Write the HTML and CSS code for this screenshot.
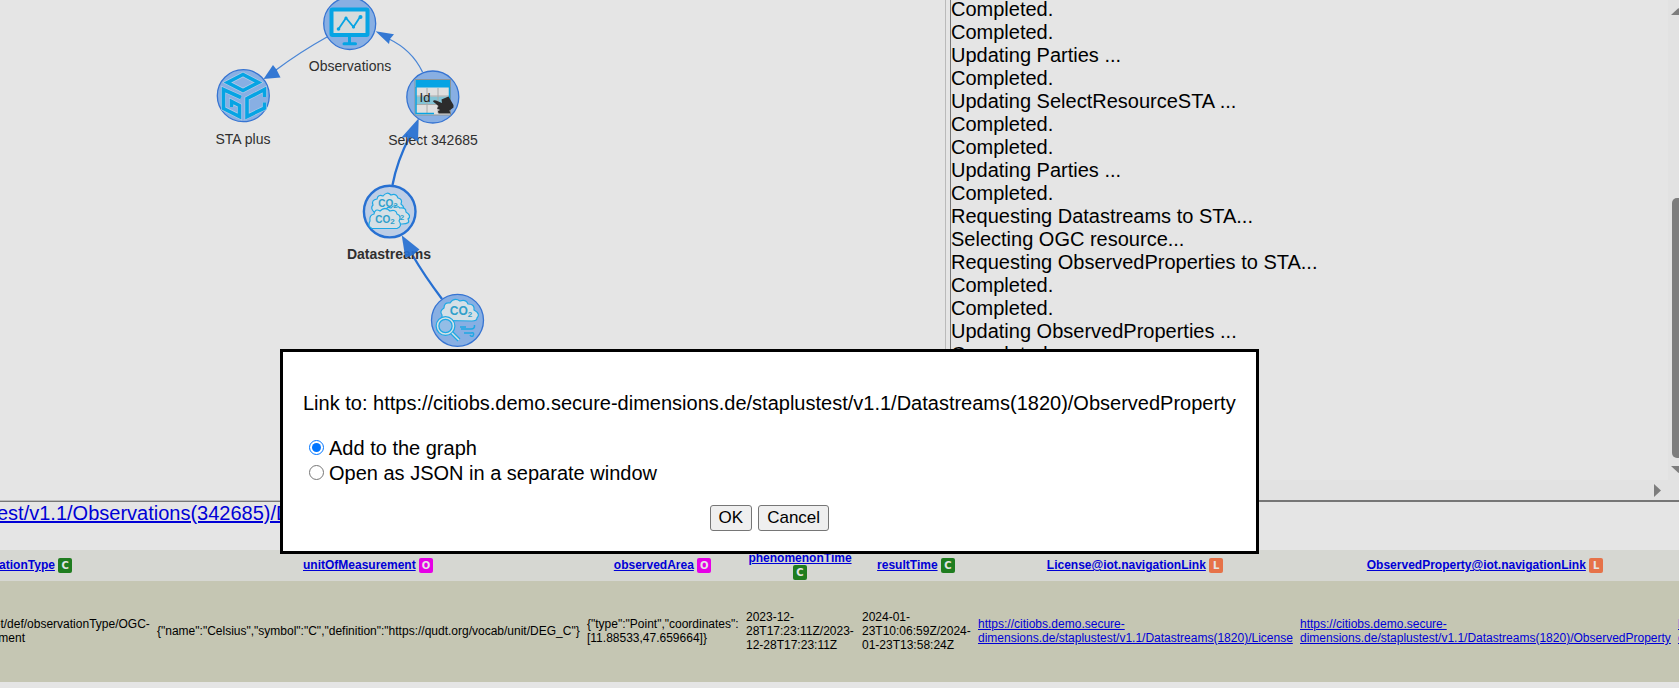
FILE: index.html
```html
<!DOCTYPE html>
<html lang="en">
<head>
<meta charset="utf-8">
<title>STA plus graph</title>
<link rel="stylesheet" href="styles.css">
</head>
<body>
<div class="app">
  <div class="workspace">
    <section class="graph" aria-label="Graph">
      <svg class="graph-canvas" width="560" height="500" viewBox="0 0 560 500">
        <g class="edges">
          <path d="M327 37Q300 52 276 70"/>
          <path d="M422.500 72Q412 50 389 39"/>
          <path class="strong" d="M392.500 185Q397 161 410 136"/>
          <path class="strong" d="M442 299Q424 275 413 256"/>
        </g>
        <g class="labels">
          <text x="350" y="71">Observations</text>
          <text x="243" y="144">STA plus</text>
          <text x="433" y="145">Select 342685</text>
          <text class="selected" x="389" y="259">Datastreams</text>
        </g>
        <g class="arrows">
          <path d="M263.500 79L273 65L276.500 69.500L280.500 77.500Z"/>
          <path d="M375.500 31.300L394 34.300L390 39L389 44Z"/>
          <path d="M418.700 118.300L418 141.500L410.500 137L401.500 137.500Z"/>
          <path d="M401.700 235.300L405.300 257.700L413 255L419.500 249.500Z"/>
        </g>
        <g class="node">
          <circle cx="349.700" cy="23.500" r="26"/>
          <rect x="331.500" y="9.500" width="36" height="25.500" rx="1" fill="#d5dbdc" stroke="#06a4e4" stroke-width="4"/>
          <path d="M349.500 36v7M344 43.700h11.500" fill="none" stroke="#06a4e4" stroke-width="3" stroke-linecap="round"/>
          <path d="M338.500 29L346 18L353.500 27L360 17" fill="none" stroke="#06a4e4" stroke-width="1.800"/>
          <g fill="#06a4e4"><circle cx="338.500" cy="29" r="1.800"/><circle cx="346" cy="18" r="1.600"/><circle cx="353.500" cy="27" r="1.600"/><circle cx="360.500" cy="17" r="2"/></g>
        </g>
        <g class="node">
          <circle cx="243.300" cy="95.700" r="26"/>
          <g stroke="#b4cce8" stroke-width="4.800" fill="none">
            <path d="M227.500 82.500L243 74.500L258.500 82.500L243 90.500Z"/>
            <path d="M241 97.500L223.500 89.500V108.500L239.500 116.500V105.500L231.500 101.500V107"/>
            <path d="M264.500 97V89.500L247 98.500V116.500L264.500 108V102.500"/>
          </g>
          <g stroke="#06a4e4" stroke-width="3.600" fill="none">
            <path d="M227.500 82.500L243 74.500L258.500 82.500L243 90.500Z"/>
            <path d="M241 97.500L223.500 89.500V108.500L239.500 116.500V105.500L231.500 101.500V107"/>
            <path d="M264.500 97V89.500L247 98.500V116.500L264.500 108V102.500"/>
          </g>
        </g>
        <g class="node">
          <circle cx="432.800" cy="97" r="26"/>
          <rect x="415" y="79.500" width="35.500" height="35.500" fill="#dfdfdf" stroke="#8d9496"/>
          <rect x="415.500" y="80" width="34.500" height="7.500" fill="#06a4e4"/>
          <rect x="416" y="96.500" width="34" height="8" fill="#84c4d6"/>
          <path d="M427 88v25M438 88v25M416 96h34M416 104.500h34" stroke="#aaa" fill="none"/>
          <path d="M416 87v26.500h18M449.500 87v13" stroke="#06a4e4" stroke-width="1.500" fill="none"/>
          <text class="id-text" x="425" y="102">Id</text>
          <path d="M433 101.500Q433.500 99.500 436 100.500L442 103L441.500 99.500L448.500 96.500L453.500 105V107.500L449.500 110.500L450.500 113.500H438.500L438 111L440 110L437 108.500L438.500 106Z" fill="#2c2c2c"/>
        </g>
        <g class="node active">
          <circle cx="389.700" cy="211.600" r="25.800"/>
          <g class="cloud">
            <path d="M374 212Q370 208 373 205Q371 200 377 199Q378 194 383 196Q387 191 391 195Q396 193 398 198Q403 199 401 204Q406 208 402 213Z"/>
            <path d="M388 224Q383 214 386 211Q386 206 391 208Q395 203 400 208Q406 207 406 212Q412 216 408 219Q411 224 402 224Z"/>
            <path d="M372 228.500Q367 226 370 221Q369 215 374 214Q375 208 380 211Q385 206 390 211Q396 209 397 214Q402 216 399 221Q403 226 397 228.500Z"/>
          </g>
          <text class="co2" x="388" y="207">CO<tspan class="sub" dy="1">2</tspan></text>
          <text class="co2 sub" x="402" y="220">2</text>
          <text class="co2" x="385" y="223">CO<tspan class="sub" dy="1">2</tspan></text>
        </g>
        <g class="node">
          <circle cx="457.500" cy="320.300" r="26"/>
          <g class="cloud">
            <path d="M448 320.500Q441 321 442 315Q439 311 444 308Q444 302 450 303Q454 297 460 301Q466 299 468 304Q475 304 474 310Q481 314 477 318Q477 321 472 321Z"/>
          </g>
          <text class="co2 large" x="461" y="315">CO<tspan class="sub" dy="2">2</tspan></text>
          <g fill="none" stroke="#1fa8e4" stroke-width="4"><circle cx="445.500" cy="326" r="8" fill="#93bde6"/><path d="M451.500 332.500L459 340"/></g>
          <g fill="none" stroke="#d5e2e6" stroke-width="1.500"><circle cx="445.500" cy="326" r="8"/><path d="M452 333L459 340"/></g>
          <path d="M461 329H471Q475 329 474.500 325M464 333H471Q475 332 473 336Q471 337 470 335M460 327H466" fill="none" stroke="#1fa8e4" stroke-width="1.500"/>
        </g>
      </svg>
    </section>
    <section class="log" aria-label="Log">
      <div class="log-text">
        <div>Completed.</div>
        <div>Completed.</div>
        <div>Updating Parties ...</div>
        <div>Completed.</div>
        <div>Updating SelectResourceSTA ...</div>
        <div>Completed.</div>
        <div>Completed.</div>
        <div>Updating Parties ...</div>
        <div>Completed.</div>
        <div>Requesting Datastreams to STA...</div>
        <div>Selecting OGC resource...</div>
        <div>Requesting ObservedProperties to STA...</div>
        <div>Completed.</div>
        <div>Completed.</div>
        <div>Updating ObservedProperties ...</div>
        <div>Completed.</div>
      </div>
      <div class="scroll-y" aria-hidden="true">
        <svg width="15" height="7" viewBox="0 0 15 7"><path d="M0 7L7.500 0L15 7Z"/></svg>
        <div class="thumb"></div>
        <svg width="15" height="7" viewBox="0 0 15 7"><path d="M0 0L7.500 7L15 0Z"/></svg>
      </div>
      <div class="scroll-x" aria-hidden="true">
        <svg width="7" height="13" viewBox="0 0 7 13"><path d="M0 0L7 6.500L0 13Z"/></svg>
      </div>
    </section>
  </div>
  <div class="resource"><a href="#resource">est/v1.1/Observations(342685)/Datastream</a></div>
  <div class="table-area">
    <table class="records">
      <colgroup><col class="c-type"><col class="c-unit"><col class="c-area"><col class="c-time"><col class="c-time"><col class="c-license"><col class="c-property"><col class="c-more"></colgroup>
      <thead>
        <tr>
          <th><a href="#t">observationType</a> <span class="badge code">C</span></th>
          <th><a href="#u">unitOfMeasurement</a> <span class="badge object">O</span></th>
          <th><a href="#a">observedArea</a> <span class="badge object">O</span></th>
          <th><a href="#p">phenomenonTime</a> <span class="badge code">C</span></th>
          <th><a href="#r">resultTime</a> <span class="badge code">C</span></th>
          <th><a href="#l">License@iot.navigationLink</a> <span class="badge link">L</span></th>
          <th><a href="#o">ObservedProperty@iot.navigationLink</a> <span class="badge link">L</span></th>
          <th></th>
        </tr>
      </thead>
      <tbody>
        <tr>
          <td>http://www.opengis.net/def/observationType/OGC-<br>OM/2.0/OM_Measurement</td>
          <td>{"name":"Celsius","symbol":"C","definition":"https://qudt.org/vocab/unit/DEG_C"}</td>
          <td>{"type":"Point","coordinates":<br>[11.88533,47.659664]}</td>
          <td>2023-12-<br>28T17:23:11Z/2023-<br>12-28T17:23:11Z</td>
          <td>2024-01-<br>23T10:06:59Z/2024-<br>01-23T13:58:24Z</td>
          <td><a href="#license">https://citiobs.demo.secure-<br>dimensions.de/staplustest/v1.1/Datastreams(1820)/License</a></td>
          <td><a href="#property">https://citiobs.demo.secure-<br>dimensions.de/staplustest/v1.1/Datastreams(1820)/ObservedProperty</a></td>
          <td><a href="#more">https://citiobs.demo.secure-<br>dimensions.de</a></td>
        </tr>
      </tbody>
    </table>
  </div>
</div>
<form class="dialog" role="dialog" aria-label="Open link">
  <p class="dialog-link">Link to: https://citiobs.demo.secure-dimensions.de/staplustest/v1.1/Datastreams(1820)/ObservedProperty</p>
  <div class="options">
    <label><input type="radio" name="action" value="graph" checked> Add to the graph</label>
    <label><input type="radio" name="action" value="json"> Open as JSON in a separate window</label>
  </div>
  <div class="actions"><button type="button">OK</button><button type="button">Cancel</button></div>
</form>
</body>
</html>
```
FILE: styles.css
```css
* { box-sizing: border-box; }
body {
  margin: 0;
  overflow: hidden;
  background: #e5e5e5;
  color: #000;
  font: 20px/23px "Liberation Sans", Arial, sans-serif;
}
a { color: #0000d6; }
.app { display: flex; flex-direction: column; min-height: 100vh; }

.workspace {
  display: grid;
  grid-template-columns: 946fr 729fr;
  column-gap: 4px;
  height: 502px;
  border-bottom: 1px solid #767676;
}
.graph { border: solid #bababa; border-width: 0 1px 1px 0; overflow: hidden; }
.graph-canvas { display: block; }
.edges path { fill: none; stroke: #4a86d6; stroke-width: 1.3; }
.edges .strong { stroke: #2770d2; stroke-width: 2.3; }
.arrows path { fill: #2770d2; fill-opacity: 0.93; }
.labels text { font-size: 14px; text-anchor: middle; fill: #2f2f2f; }
.labels .selected { font-weight: bold; }
.node > circle { fill: #88afe3; stroke: #3674d2; stroke-width: 1.3; }
.active > circle { fill: #bdcee6; stroke: #2770d2; stroke-width: 2.4; }
.cloud path { fill: #d5e0e6; stroke: #1fa8e4; stroke-width: 1.2; }
.co2 { font: bold 10px "Liberation Sans", Arial, sans-serif; text-anchor: middle; fill: #2f9fcb; }
.large { font-size: 12px; }
.sub { font-size: 8px; }
.id-text { font-size: 13px; text-anchor: middle; fill: #222; }

.log {
  display: grid;
  grid-template-columns: minmax(0, 1fr) 11px;
  grid-template-rows: minmax(0, 1fr) 20px;
  border-left: 1px solid #767676;
  border-bottom: 1px solid #767676;
  overflow: hidden;
}
.log-text { margin-top: -2px; overflow: hidden; white-space: nowrap; }
.log svg { fill: #7d7d7d; flex: none; }
.scroll-y {
  display: flex;
  flex-direction: column;
  gap: 8px;
  padding: 8px 0 7px 3px;
  background: #e2e2e2;
  overflow: hidden;
}
.thumb { flex: none; height: 260px; width: 14px; margin: auto 0 0 1px; border-radius: 5px; background: #7d7d7d; }
.scroll-x { grid-column: 1 / -1; display: flex; justify-content: flex-end; align-items: center; padding-right: 18px; background: #e2e2e2; }

.resource { height: 48px; margin-left: -3px; white-space: nowrap; overflow: hidden; }
.table-area { overflow: hidden; }
.records {
  width: 2000px;
  margin-left: -121px;
  table-layout: fixed;
  border-collapse: collapse;
  font-size: 12px;
  line-height: 14px;
}
.c-type { width: 274px; }
.c-unit { width: 430px; }
.c-area { width: 159px; }
.c-time { width: 116px; }
.c-license { width: 322px; }
.c-property { width: 378px; }
.records th { height: 31px; padding: 0 4px; background: #d6d7d2; }
.records td { height: 101px; padding: 0 4px 1px; background: #c5c6b3; white-space: nowrap; }
.badge {
  display: inline-block;
  width: 14px;
  border-radius: 2px;
  color: #e5e5e5;
  font: bold 10px/15px "DejaVu Sans", Verdana, sans-serif;
  text-align: center;
}
.code { background: #1f7d1f; }
.object { background: #e600e6; }
.link { background: #e67248; }

.dialog {
  position: absolute;
  left: 280px;
  top: 349px;
  padding: 20px;
  border: 3px solid #000;
  background: #fff;
  white-space: nowrap;
}
.dialog p { margin: 20px 0 22px; }
.options { display: flex; flex-direction: column; gap: 2px; }
.options label { display: flex; align-items: center; gap: 5px; }
.options input { width: 15px; height: 15px; margin: 0 0 3px 6px; }
.actions { display: flex; justify-content: center; gap: 6px; margin-top: 20px; }
.actions button {
  height: 26px;
  padding: 0 8px;
  border: 1px solid #767676;
  border-radius: 3px;
  background: #efefef;
  color: #000;
  font: 17px/20px "Liberation Sans", Arial, sans-serif;
}
```
